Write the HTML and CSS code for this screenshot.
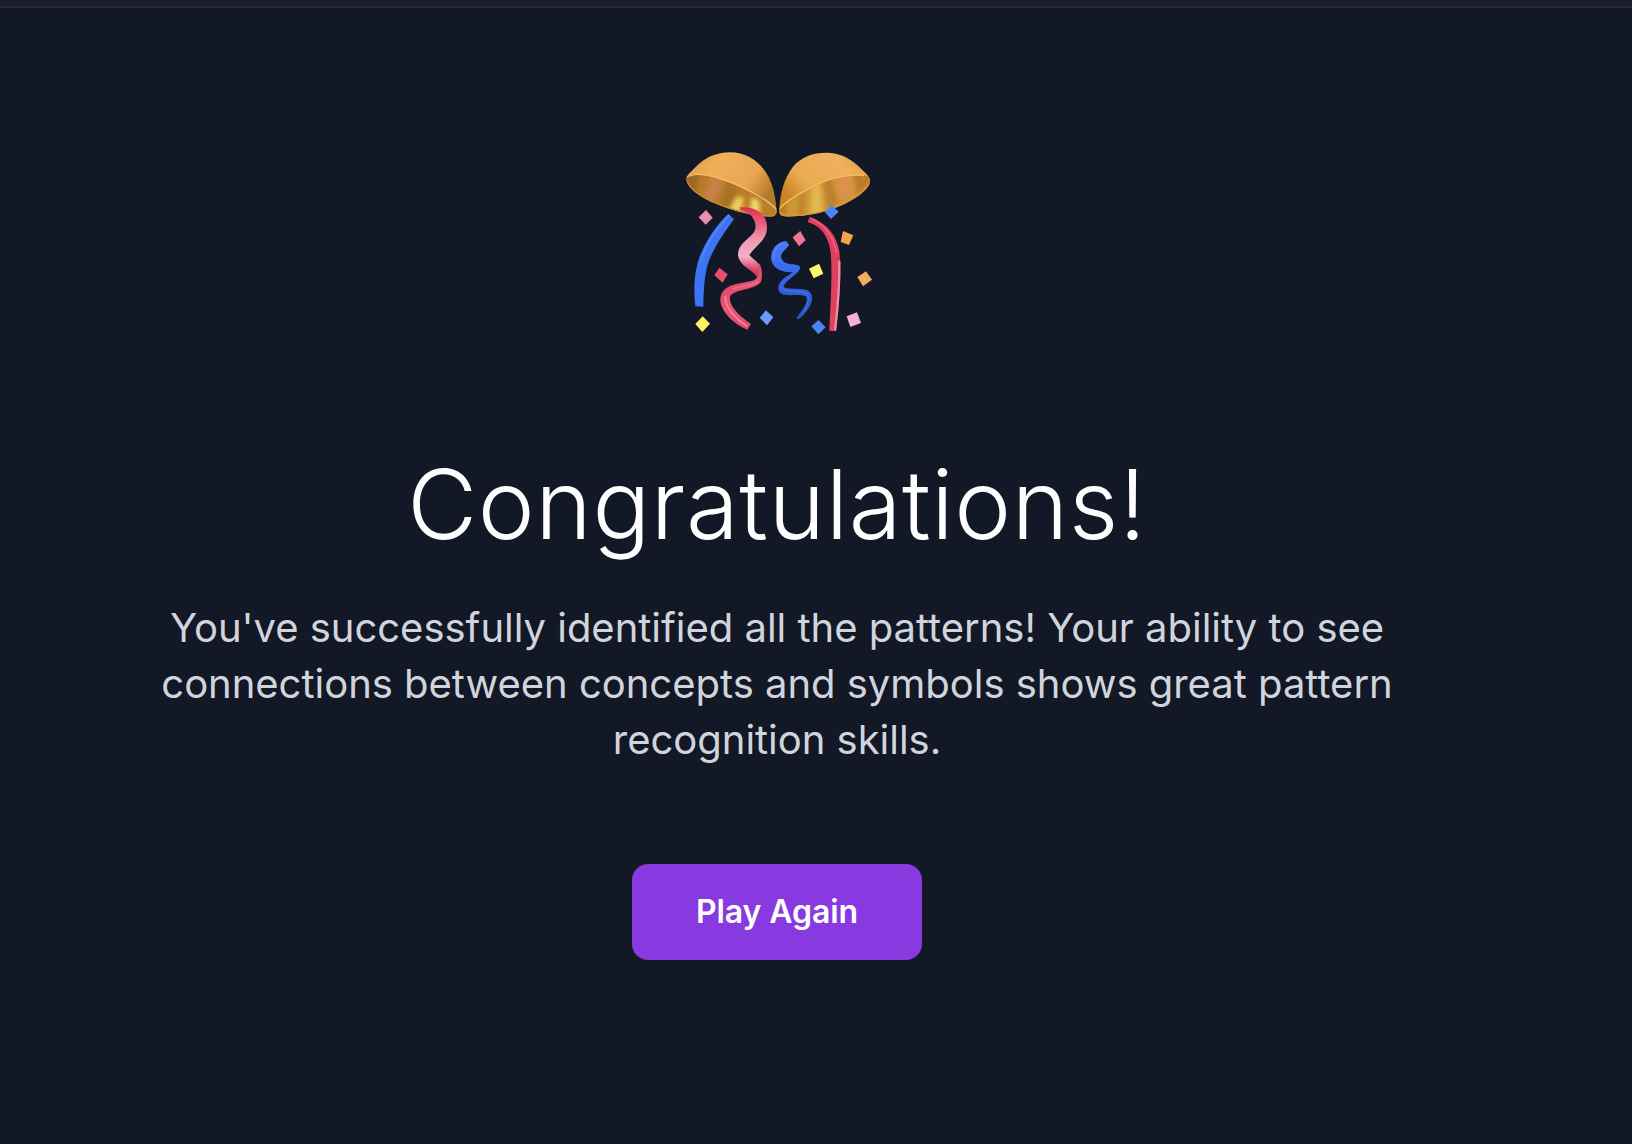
FILE: index.html
```html
<!DOCTYPE html>
<html lang="en">
<head>
<meta charset="utf-8">
<title>Congratulations!</title>
<link rel="stylesheet" href="styles.css">
</head>
<body>
<div class="topbar"></div>
<main class="result">
  <svg class="confetti" viewBox="0 0 660 615" aria-hidden="true">
    <defs>
      <filter id="soft" x="-5%" y="-5%" width="110%" height="110%"><feGaussianBlur stdDeviation="6"/></filter>
      <clipPath id="clipL"><path d="M49 116C50 101 90 100 128 111C190 126 290 173 320 210C321 222 316 229 300 230C255 229 205 217 155 198C98 177 53 149 49 116Z"/></clipPath>
      <clipPath id="clipR"><path d="M328 210C347 181 398 154 440 134C485 111 540 101 577 105C594 107 602 116 600 126C592 153 560 174 520 194C470 216 414 228 351 230C332 230 327 224 328 210Z"/></clipPath>
      <linearGradient id="domeL" x1="0" y1="0" x2="1" y2=".5"><stop offset="0" stop-color="#d99a42"/><stop offset=".35" stop-color="#efb059"/><stop offset=".75" stop-color="#e9a553"/><stop offset="1" stop-color="#b57a28"/></linearGradient>
      <linearGradient id="domeR" x1="0" y1=".6" x2="1" y2="0"><stop offset="0" stop-color="#c98225"/><stop offset=".25" stop-color="#e9ab50"/><stop offset=".7" stop-color="#efaf5d"/><stop offset="1" stop-color="#d6962f"/></linearGradient>
      <linearGradient id="pinkTop" x1="0" y1="0" x2="0" y2="1"><stop offset="0" stop-color="#db3253"/><stop offset=".2" stop-color="#e95a7c"/><stop offset=".45" stop-color="#f09bb4"/><stop offset=".66" stop-color="#f3b0c8"/><stop offset=".82" stop-color="#d94f6c"/><stop offset="1" stop-color="#a92943"/></linearGradient>
      <linearGradient id="pinkLow" x1="0" y1="0" x2=".5" y2="1"><stop offset="0" stop-color="#b93350"/><stop offset=".3" stop-color="#de4565"/><stop offset=".6" stop-color="#eb5573"/><stop offset="1" stop-color="#e2496a"/></linearGradient>
      <linearGradient id="blue" x1="0" y1="0" x2="0" y2="1"><stop offset="0" stop-color="#4a7df3"/><stop offset=".45" stop-color="#3466e9"/><stop offset="1" stop-color="#2851bd"/></linearGradient>
    </defs>

    <!-- opened halves of the ball -->
    <path fill="url(#domeL)" d="M49 119C48 108 58 100 74 84C104 52 140 37 180 37C228 37 265 62 289 99C310 133 318 175 320 219Z"/>
    <g clip-path="url(#clipL)">
      <path fill="#b97a2a" d="M40 90H330V240H40Z"/>
      <g filter="url(#soft)">
        <path fill="#9a6826" d="M40 100L90 100L75 165L40 140Z"/>
        <path fill="#c88048" d="M125 105L165 115L130 195L95 180Z"/>
        <path fill="#a87224" d="M172 120L205 130L190 215L150 200Z"/>
        <path fill="#ecd05a" d="M200 170L222 172L212 225L178 210Z"/>
        <path fill="#f0dc68" d="M245 170L268 184L270 235L238 225Z"/>
        <path fill="#b97f2a" d="M275 170L325 205L315 222L275 215Z"/>
      </g>
    </g>
    <path fill="none" stroke="#f3bd66" stroke-width="4" d="M51 111C70 99 105 103 135 111C200 130 284 170 319 208"/>
    <path fill="none" stroke="#c58a32" stroke-width="4" d="M51 122C58 150 105 178 155 196C210 216 255 228 300 228C312 228 318 222 318 212"/>
    <path fill="url(#domeR)" d="M328 213C329 165 341 116 369 80C395 49 432 37 474 38C515 40 550 60 575 88C590 102 600 112 600 124Z"/>
    <g clip-path="url(#clipR)">
      <path fill="#cf9637" d="M320 90H610V240H320Z"/>
      <g filter="url(#soft)">
        <path fill="#b27722" d="M320 195L350 185L345 225L322 225Z"/>
        <path fill="#b9822c" d="M388 160L402 155L402 235L385 235Z"/>
        <path fill="#e2b750" d="M425 140L452 130L460 225L420 230Z"/>
        <path fill="#bd8030" d="M460 125L485 115L505 190L472 210Z"/>
        <path fill="#de904e" d="M495 112L535 105L545 165L512 185Z"/>
        <path fill="#bd792f" d="M550 100L605 100L600 130L560 165Z"/>
      </g>
    </g>
    <path fill="none" stroke="#f0c061" stroke-width="4" d="M329 207C351 178 402 154 440 134C486 112 544 101 582 107"/>
    <path fill="none" stroke="#d29a3b" stroke-width="4" d="M330 216C335 232 365 228 398 225C465 219 570 179 598 130"/>

    <!-- streamers -->
    <path fill="#3e73f2" d="M175 221L192 238C160 280 131 325 116 365C103 402 101 450 100 500L76 499C69 444 74 386 92 342C111 297 138 257 175 221Z"/>
    <path fill="none" stroke="#5589fa" stroke-width="4" d="M178 226C134 271 104 323 92 365"/>
    <path fill="url(#pinkTop)" d="M209 202C263 200 290 223 291 260C292 299 265 309 238 345C251 361 274 366 275 400L273 425L260 412C250 389 210 382 204 346C203 313 231 302 250 279C266 260 254 219 211 209Z"/>
    <path fill="url(#pinkLow)" d="M267 368C278 386 277 413 272 427C250 452 187 448 180 471C175 493 203 525 243 552L232 569C190 552 153 513 151 482C151 431 207 432 244 423C268 417 268 399 267 368Z"/>
    <path fill="none" stroke="#f08aa6" stroke-width="5" stroke-linecap="round" d="M166 470C165 506 202 540 230 558"/>
    <path fill="none" stroke="#e87590" stroke-width="4" stroke-linecap="round" d="M190 446C220 436 247 438 263 426"/>
    <path fill="url(#blue)" d="M348 303L358 315C345 331 330 339 334 355C343 379 379 369 389 379C399 396 344 421 341 440C347 449 397 443 415 452C443 474 414 515 387 538L379 535C397 508 416 489 409 470C391 461 353 469 337 463C315 452 325 424 348 411L369 396C341 400 304 386 303 354C303 327 322 305 348 303Z"/>
    <path fill="none" stroke="#568afa" stroke-width="4" stroke-linecap="round" d="M340 308C318 319 309 334 313 354"/>
    <path fill="none" stroke="#4777e8" stroke-width="3" stroke-linecap="round" d="M333 441C333 458 381 451 404 457C425 466 411 507 394 524"/>
    <g transform="translate(300 0)">
      <path fill="#df405e" d="M119 230C174 251 200 288 208 333C215 401 207 489 198 574L178 572C181 497 187 422 183 348C179 300 161 260 113 246Z"/>
      <path fill="none" stroke="#f08ba6" stroke-width="7" d="M208 362C209 431 203 507 195 571"/>
      <path fill="none" stroke="#f16883" stroke-width="4" d="M126 237C166 255 191 293 200 338"/>
    </g>

    <!-- paper squares -->
    <path fill="#ee8cae" d="M108 210L128 233L107 254L86 232Z"/>
    <path fill="#e94e70" d="M148 383L173 403L158 428L133 406Z"/>
    <path fill="#fdf45f" d="M98 529L120 551L97 576L76 552Z"/>
    <path fill="#6d9cf8" d="M288 511L310 532L291 556L269 533Z"/>
    <path fill="#4c84f6" d="M485 195L506 215L483 237L464 216Z"/>
    <path fill="#f07594" d="M391 273L407 301L387 319L368 292Z"/>
    <path fill="#f2a649" d="M519 273L550 286L537 315L512 306Z"/>
    <path fill="#fbf66d" d="M447 371L460 401L431 415L417 386Z"/>
    <path fill="#f1ad61" d="M588 394L606 419L579 439L562 411Z"/>
    <path fill="#4b84f4" d="M446 540L467 562L445 583L424 559Z"/>
    <path fill="#f4b1d2" d="M561 517L573 549L541 561L530 529Z"/>
  </svg>
  <h1 class="title">Congratulations!</h1>
  <p class="message">You've successfully identified all the patterns! Your ability to see connections between concepts and symbols shows great pattern recognition skills.</p>
  <button class="play" type="button">Play Again</button>
</main>
</body>
</html>
```
FILE: styles.css
```css
* { box-sizing: border-box; }
body {
  margin: 0;
  height: 1144px;
  overflow: hidden;
  background: #121826;
  font-family: Inter, sans-serif;
}
.topbar {
  height: 8px;
  background: #1b1e26;
  border-bottom: 2px solid #272a34;
}
.result {
  width: 1554px;
  padding: 132px 150px 0;
  display: flex;
  flex-direction: column;
  align-items: center;
  text-align: center;
}
.confetti {
  width: 220px;
  height: 205px;
  margin: 0 0 111px 6px;
}
.title {
  margin: 0 0 48px;
  font-size: 96px;
  line-height: 96px;
  font-weight: 300;
  letter-spacing: 0.6px;
  color: #fff;
}
.message {
  margin: 0 0 96px;
  font-size: 40px;
  line-height: 56px;
  font-weight: 400;
  letter-spacing: -0.02px;
  color: #d1d5db;
}
.play {
  width: 290px;
  height: 96px;
  padding: 0;
  border: 0;
  border-radius: 16px;
  background: #8839df;
  color: #fff;
  font: 600 32px/48px Inter, sans-serif;
  letter-spacing: -0.1px;
}
```
